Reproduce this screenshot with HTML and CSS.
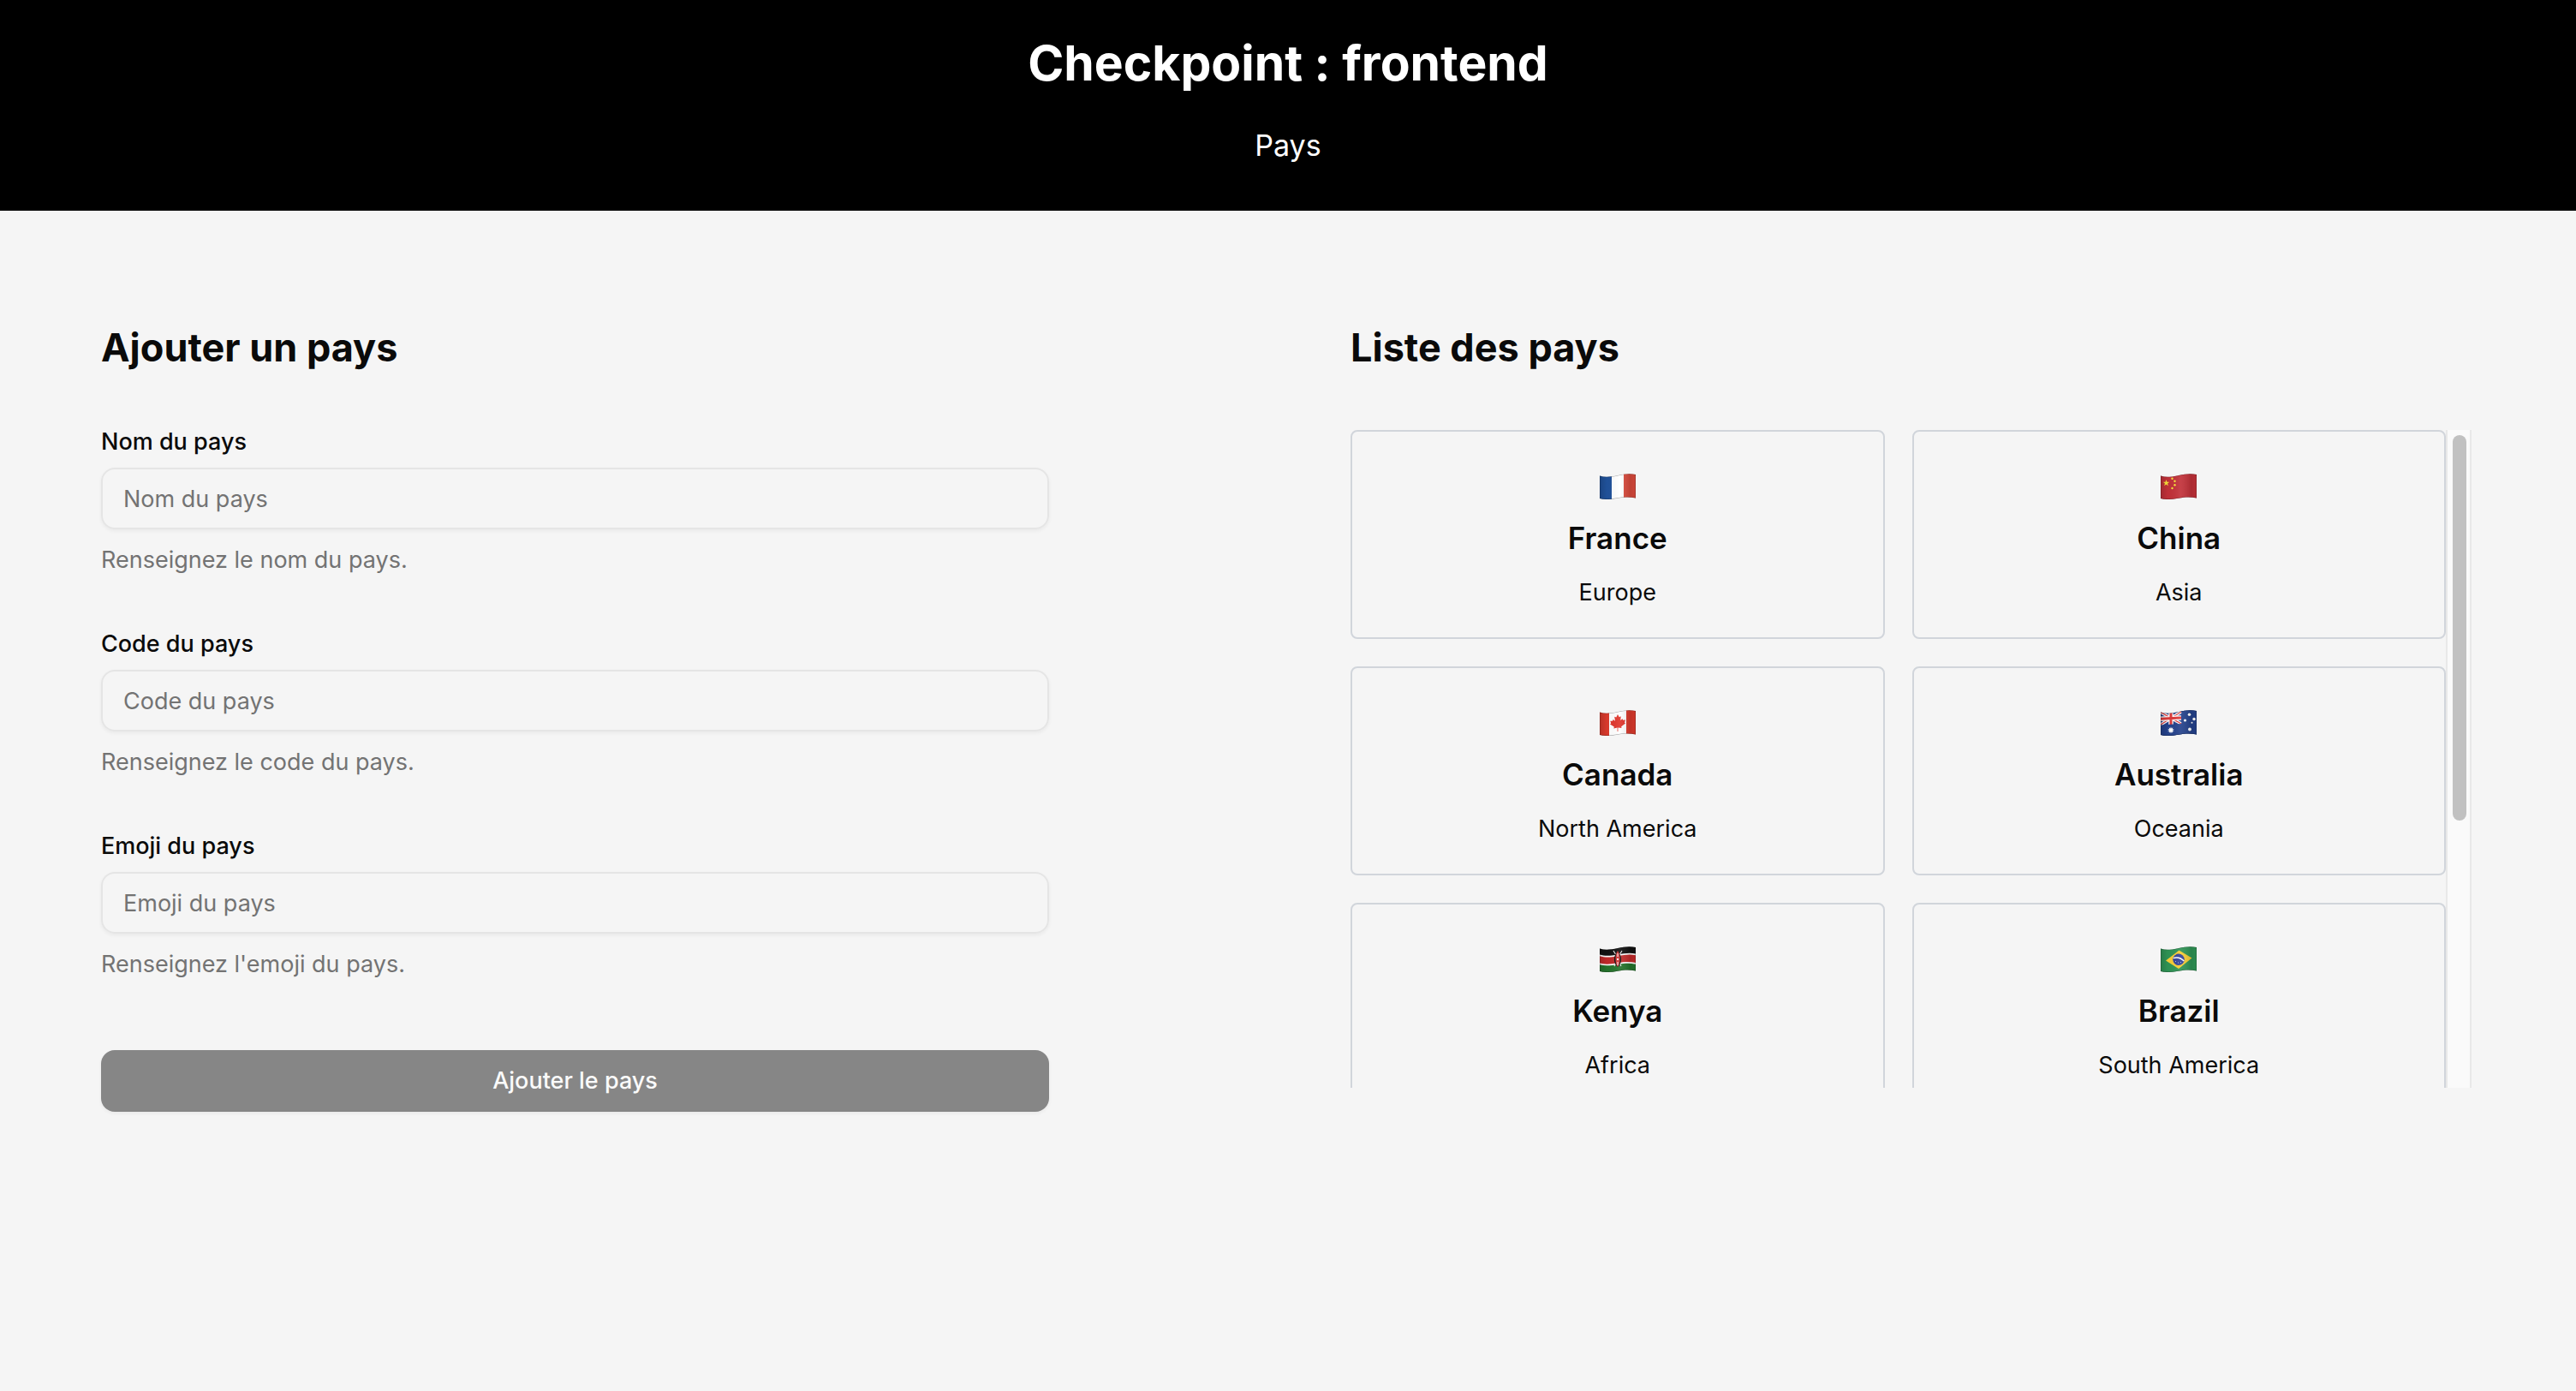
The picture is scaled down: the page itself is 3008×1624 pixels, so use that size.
FILE: index.html
```html
<!DOCTYPE html>
<html lang="fr">
<head>
<meta charset="utf-8">
<meta name="viewport" content="width=device-width, initial-scale=1">
<title>Checkpoint : frontend</title>
<link rel="stylesheet" href="styles.css">
</head>
<body>
<svg class="defs" aria-hidden="true">
  <defs>
    <clipPath id="wave"><path d="M0 2.5C6 4.5 13 3.8 21 2S35-.6 42 1V28.6C35 26.8 29 27.2 21 28.7S6 30.6 0 29Z"/></clipPath>
    <linearGradient id="shade" x1="0" x2="1" y1="0" y2="0">
      <stop offset="0" stop-color="#000" stop-opacity=".16"/>
      <stop offset=".2" stop-color="#000" stop-opacity=".02"/>
      <stop offset=".55" stop-color="#fff" stop-opacity=".08"/>
      <stop offset=".85" stop-color="#000" stop-opacity=".12"/>
      <stop offset="1" stop-color="#000" stop-opacity=".06"/>
    </linearGradient>
    <g id="finish">
      <path d="M0 0H42V30H0Z" fill="url(#shade)"/>
      <path d="M0 2.5C6 4.5 13 3.8 21 2S35-.6 42 1V28.6C35 26.8 29 27.2 21 28.7S6 30.6 0 29Z" fill="none" stroke="#000" stroke-opacity=".35"/>
    </g>
    <path id="star" d="M0-4 .95-1.3 3.8-1.25 1.5.5 2.35 3.25 0 1.6-2.35 3.25-1.5.5-3.8-1.25-.95-1.3Z"/>
  </defs>
</svg>

<header class="banner">
  <h1 class="banner-title">Checkpoint : frontend</h1>
  <p class="banner-subtitle">Pays</p>
</header>

<main class="page">
  <section>
    <h2 class="section-title">Ajouter un pays</h2>
    <form class="form">
      <div class="field">
        <label class="label" for="name">Nom du pays</label>
        <input class="input" id="name" type="text" placeholder="Nom du pays" aria-describedby="name-help">
        <p class="help" id="name-help">Renseignez le nom du pays.</p>
      </div>
      <div class="field">
        <label class="label" for="code">Code du pays</label>
        <input class="input" id="code" type="text" placeholder="Code du pays" aria-describedby="code-help">
        <p class="help" id="code-help">Renseignez le code du pays.</p>
      </div>
      <div class="field">
        <label class="label" for="emoji">Emoji du pays</label>
        <input class="input" id="emoji" type="text" placeholder="Emoji du pays" aria-describedby="emoji-help">
        <p class="help" id="emoji-help">Renseignez l'emoji du pays.</p>
      </div>
      <button class="submit" type="submit" disabled>Ajouter le pays</button>
    </form>
  </section>

  <section>
    <h2 class="section-title">Liste des pays</h2>
    <div class="scroll-area">
      <ul class="countries">
        <li class="card">
          <div class="flag"><svg class="flag-art" viewBox="0 0 42 30" aria-hidden="true"><g clip-path="url(#wave)">
            <path fill="#fff" d="M0 0H42V30H0Z"/><path fill="#20529b" d="M0 0H14V30H0Z"/><path fill="#d94a3c" d="M28 0H42V30H28Z"/>
            <use href="#finish"/></g></svg></div>
          <h3 class="name">France</h3>
          <p class="continent">Europe</p>
        </li>
        <li class="card">
          <div class="flag"><svg class="flag-art" viewBox="0 0 42 30" aria-hidden="true"><g clip-path="url(#wave)">
            <path fill="#c23139" d="M0 0H42V30H0Z"/>
            <g fill="#f8e13a"><use href="#star" x="6.500" y="11"/><circle cx="13.500" cy="5.800" r="1.200"/><circle cx="16.500" cy="8.700" r="1.200"/><circle cx="16.500" cy="13.300" r="1.200"/><circle cx="13.500" cy="17" r="1.200"/></g>
            <use href="#finish"/></g></svg></div>
          <h3 class="name">China</h3>
          <p class="continent">Asia</p>
        </li>
        <li class="card">
          <div class="flag"><svg class="flag-art" viewBox="0 0 42 30" aria-hidden="true"><g clip-path="url(#wave)">
            <path fill="#fff" d="M0 0H42V30H0Z"/><path fill="#db3a2c" d="M0 0H11V30H0ZM31 0H42V30H31Z"/>
            <path fill="#e0352b" d="M21 5 22.800 8.200 24.800 7.200 24.200 12 26.500 10.200 27.200 11.800 30 11.500 29 14.500 30 15.500 25.200 19.300 25.500 21 21.400 20.500V25H20.600V20.600L16.400 21.400 16.800 19.600 12 16.500 13.200 15.500 12.200 12.800 15 12.800 15.700 11 18 12.800 17.200 7.800 19.300 8.600Z"/>
            <use href="#finish"/></g></svg></div>
          <h3 class="name">Canada</h3>
          <p class="continent">North America</p>
        </li>
        <li class="card">
          <div class="flag"><svg class="flag-art" viewBox="0 0 42 30" aria-hidden="true"><g clip-path="url(#wave)">
            <path fill="#24428c" d="M0 0H42V30H0Z"/>
            <path stroke="#fff" stroke-width="3.400" d="M0 2.500 24 16M0 17 24 2"/>
            <path stroke="#dd3a3a" stroke-width="1.200" d="M0 2.500 24 16M0 17 24 2"/>
            <path stroke="#fff" stroke-width="5.500" d="M12 0V17M0 10.200 24 9"/>
            <path stroke="#dd3a3a" stroke-width="3" d="M12 0V17M0 10.200 24 9"/>
            <path fill="#24428c" d="M24.500 0H42V30H0V17.500L24.500 16Z"/>
            <g fill="#fff"><use href="#star" x="12" y="23.500"/><use href="#star" transform="translate(12 23.500) rotate(180)"/><circle cx="33.500" cy="5.200" r="1.800"/><circle cx="28.500" cy="12" r="1.600"/><circle cx="39" cy="10.500" r="1.700"/><circle cx="36.500" cy="14.800" r="1"/><circle cx="34" cy="22.500" r="1.900"/></g>
            <use href="#finish"/></g></svg></div>
          <h3 class="name">Australia</h3>
          <p class="continent">Oceania</p>
        </li>
        <li class="card">
          <div class="flag"><svg class="flag-art" viewBox="0 0 42 30" aria-hidden="true"><g clip-path="url(#wave)">
            <path fill="#111" d="M0 0H42V12H0Z"/>
            <path fill="#25742c" d="M0 18H42V30H0Z"/>
            <path fill="#fff" d="M0 9.500C6 11.500 13 11 21 9.500S35 7 42 8.500V20.800C35 19 29 19.500 21 21S6 23 0 21.300Z"/>
            <path fill="#c22a2a" d="M0 11.200C6 13.200 13 12.700 21 11.200S35 8.700 42 10.200V19.100C35 17.300 29 17.800 21 19.300S6 21.300 0 19.600Z"/>
            <path stroke="#eee" stroke-width="1.100" d="M16 5 18.500 9M26 5 23.500 9M18.500 20 17 23M23.500 20 25 23"/>
            <path fill="#111" d="M21 6C15.500 10 15.500 20 21 24 26.500 20 26.500 10 21 6Z"/>
            <path fill="#cf3535" d="M21 5C17.500 10 17.500 19 21 24 24.500 19 24.500 10 21 5Z"/>
            <path fill="#fff" d="M20.500 8H21.500V12H20.500ZM20.500 18H21.500V22H20.500ZM20 14H22V16H20Z"/>
            <use href="#finish"/></g></svg></div>
          <h3 class="name">Kenya</h3>
          <p class="continent">Africa</p>
        </li>
        <li class="card">
          <div class="flag"><svg class="flag-art" viewBox="0 0 42 30" aria-hidden="true"><g clip-path="url(#wave)">
            <path fill="#2f9455" d="M0 0H42V30H0Z"/>
            <path fill="#f8cd35" d="M6 16.500 21.500 4.500 36.500 13.500 21 26Z"/>
            <circle cx="21" cy="15.300" r="6.700" fill="#33439a"/>
            <path fill="none" stroke="#fff" stroke-width="1.500" d="M14.700 13.600C19 12.200 24 13.500 27.300 17"/>
            <path fill="#fff" fill-opacity=".6" d="M17 17H18V18H17ZM20 18.500H21V19.500H20ZM23 18H24V19H23Z"/>
            <use href="#finish"/></g></svg></div>
          <h3 class="name">Brazil</h3>
          <p class="continent">South America</p>
        </li>
      </ul>
      <div class="scrollbar" aria-hidden="true"><div class="scrollbar-thumb"></div></div>
    </div>
  </section>
</main>
</body>
</html>
```
FILE: styles.css
```css
*, *::before, *::after { box-sizing: border-box; }

body {
  margin: 0;
  min-height: 100vh;
  background: #f5f5f5;
  color: #0a0a0a;
  font-family: Inter, "Liberation Sans", sans-serif;
  font-size: 27px;
  line-height: 40px;
}

h1, h2, h3, p, ul { margin: 0; padding: 0; }

.defs { position: absolute; width: 0; height: 0; }

.banner {
  display: flex;
  flex-direction: column;
  align-items: center;
  gap: 32px;
  padding: 38px 0 48px;
  background: #000;
  color: #fff;
}
.banner-title { font-size: 57px; line-height: 72px; font-weight: 700; }
.banner-subtitle { font-size: 34px; line-height: 56px; }

.page {
  display: grid;
  grid-template-columns: 1107fr 1309fr;
  gap: 352px;
  align-items: start;
  padding: 128px 122px 128px 118px;
}

.section-title {
  margin-bottom: 64px;
  font-size: 45px;
  line-height: 64px;
  font-weight: 700;
}

.form { display: flex; flex-direction: column; gap: 64px; }
.field { display: flex; flex-direction: column; gap: 16px; }
.label { line-height: 28px; font-weight: 500; }
.input {
  width: 100%;
  height: 72px;
  padding: 0 24px;
  border: 2px solid #e5e5e5;
  border-radius: 16px;
  background: transparent;
  box-shadow: 0 2px 4px rgba(0, 0, 0, 0.05);
  color: inherit;
  font: inherit;
}
.input::placeholder { color: #737373; opacity: 1; }
.help { color: #737373; }
.submit {
  height: 72px;
  margin-top: 16px;
  border: 0;
  border-radius: 16px;
  background: #868686;
  box-shadow: 0 2px 4px rgba(0, 0, 0, 0.05);
  color: #fafafa;
  font: inherit;
  font-weight: 500;
}

.scroll-area {
  display: grid;
  grid-template-columns: 1fr 30px;
  grid-template-rows: minmax(0, 1fr);
  max-height: 768px;
  overflow: hidden;
}
.countries {
  display: grid;
  grid-template-columns: 1fr 1fr;
  gap: 32px;
  align-content: start;
  min-height: 0;
  max-height: 768px;
  overflow-y: auto;
  list-style: none;
}
.scrollbar {
  padding: 6px 4px 0 6px;
  border: solid #e8e8e8;
  border-width: 0 2px;
  background: #fafafa;
}
.scrollbar-thumb {
  height: 59%;
  border-radius: 8px;
  background: #c1c1c1;
}

.card {
  display: flex;
  flex-direction: column;
  align-items: center;
  padding: 32px;
  border: 2px solid #d1d5db;
  border-radius: 8px;
  text-align: center;
}
.flag { display: flex; align-items: center; height: 64px; }
.flag-art { width: 42px; height: 30px; }
.name { margin-bottom: 16px; font-size: 35px; line-height: 56px; font-weight: 600; }
```
